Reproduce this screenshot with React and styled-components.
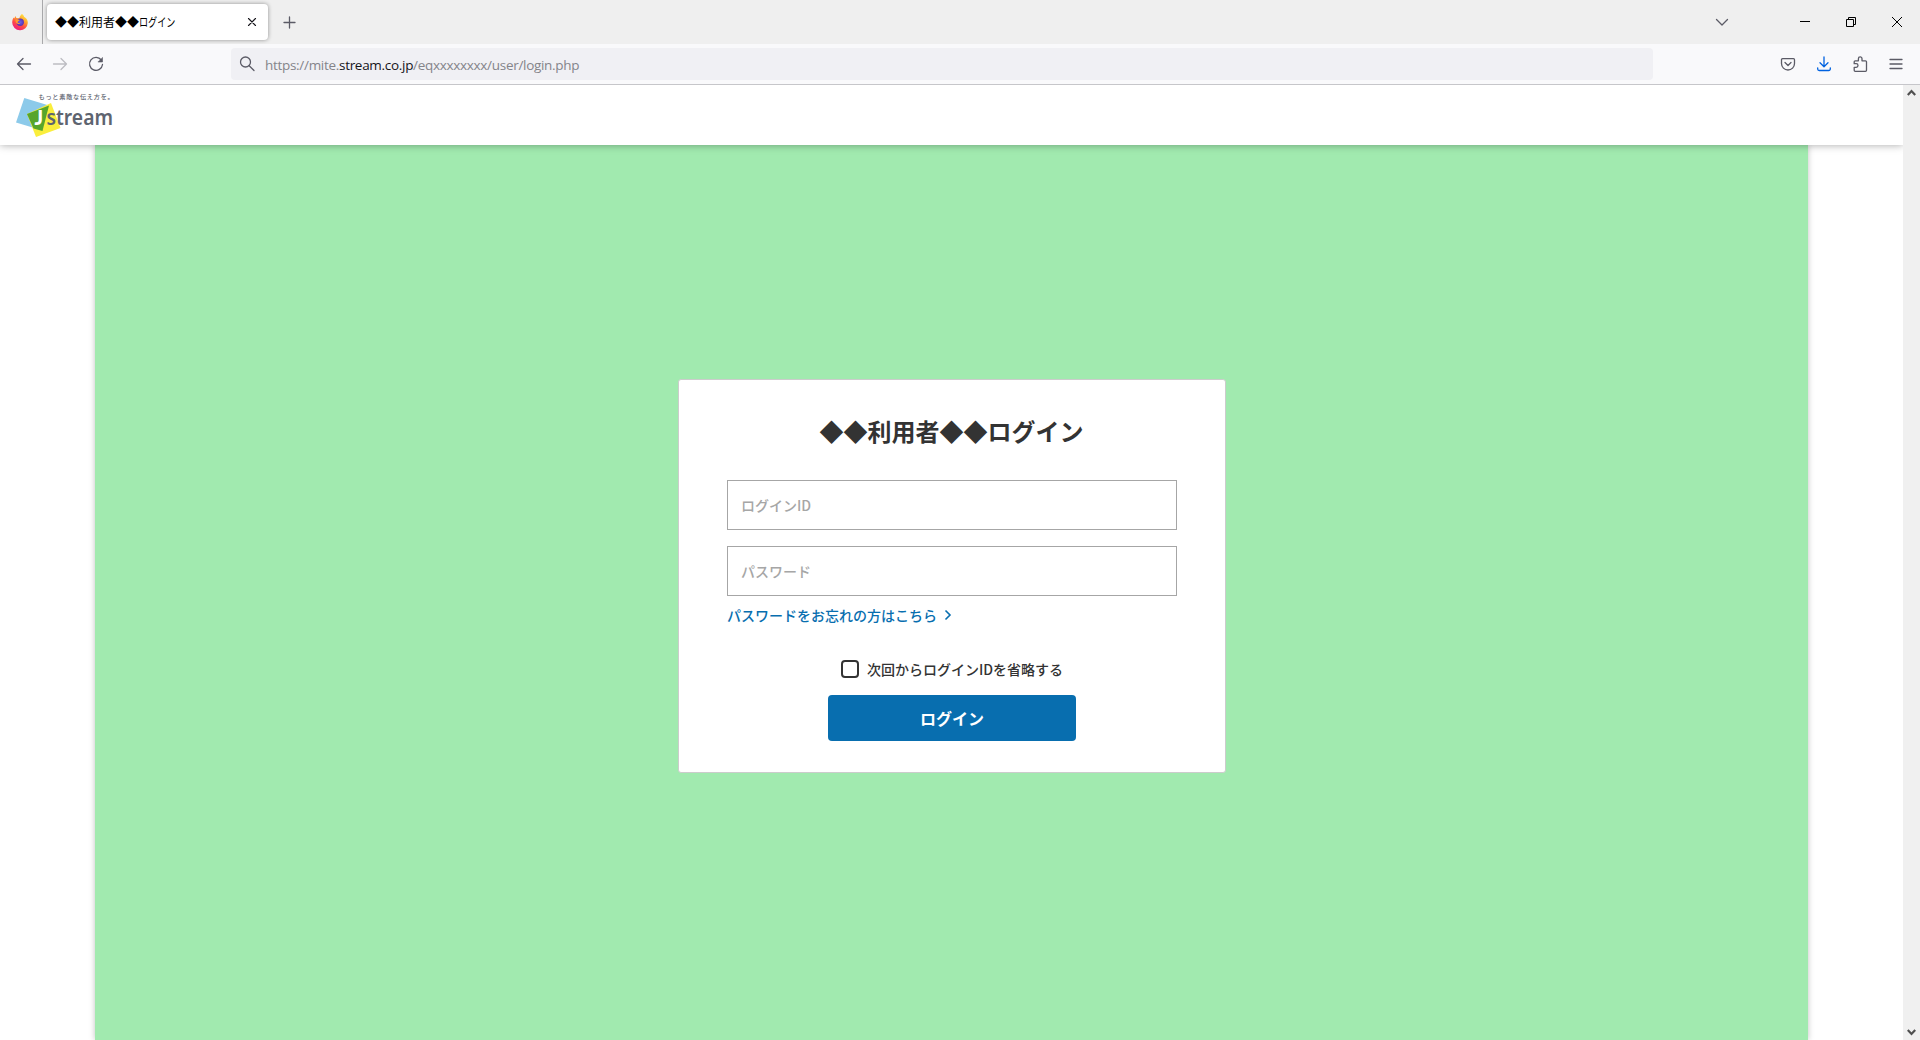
import React from "react";
import styled, { createGlobalStyle } from "styled-components";

const GlobalStyle = createGlobalStyle`
  * {
    box-sizing: border-box;
  }
  body {
    margin: 0;
    overflow: hidden;
    color: #333;
    font-family: "Noto Sans CJK JP", "Noto Sans", sans-serif;
  }
`;

const Window = styled.div`
  display: flex;
  flex-direction: column;
  height: 100vh;
  background: #fff;
`;

const TabBar = styled.div`
  display: flex;
  align-items: center;
  height: 44px;
  flex: none;
  background: #efefef;
`;

const FirefoxView = styled.div`
  display: flex;
  align-items: center;
  padding-left: 11px;
  width: 43px;
  height: 44px;
  border-right: 1px solid #a9a9ab;
`;

const Tab = styled.div`
  display: flex;
  align-items: center;
  justify-content: space-between;
  margin-left: 4px;
  padding: 0 10px 0 8px;
  width: 221px;
  height: 36px;
  border-radius: 4px;
  background: #fff;
  box-shadow: 0 0 4px rgba(0, 0, 0, 0.4);
`;

const TabTitle = styled.span`
  display: flex;
  color: #000;
  font-size: 12px;
  line-height: 18px;
  white-space: nowrap;
`;

const NarrowKana = styled.span`
  transform: scaleX(0.76);
  transform-origin: left;
`;

const NewTab = styled.div`
  display: flex;
  margin-left: 13px;
`;

const WindowButtons = styled.div`
  display: flex;
  align-items: center;
  margin-left: auto;
  padding-right: 18px;
`;

const WindowButton = styled.div`
  display: flex;
  margin-left: ${(p) => p.$gap}px;
`;

const Toolbar = styled.div`
  display: flex;
  align-items: center;
  height: 41px;
  flex: none;
  border-bottom: 1px solid #c6c6ca;
  background: #f9f9fb;
`;

const NavButtons = styled.div`
  display: flex;
  gap: 20px;
  padding-left: 16px;
  width: 231px;
`;

const UrlBar = styled.div`
  display: flex;
  align-items: center;
  width: 1422px;
  height: 32px;
  padding-left: 8px;
  border-radius: 4px;
  background: #f0f0f4;
`;

const Url = styled.span`
  margin: 1px 0 0 10px;
  color: #84848a;
  font-family: "Open Sans", "Noto Sans", sans-serif;
  font-size: 13.5px;
  letter-spacing: -0.3px;
  white-space: nowrap;

  b {
    color: #15141a;
    font-weight: 400;
  }
`;

const ToolbarActions = styled.div`
  display: flex;
  align-items: center;
  gap: 20px;
  margin-left: auto;
  padding-right: 16px;
`;

const Viewport = styled.div`
  display: flex;
  flex: 1;
  min-height: 0;
`;

const Page = styled.div`
  display: flex;
  flex-direction: column;
  flex: 1;
  overflow: hidden;
`;

const Header = styled.header`
  position: relative;
  z-index: 1;
  height: 60px;
  flex: none;
  padding: 1px 0 0 12px;
  background: #fff;
  box-shadow: 0 0 8px rgba(0, 0, 0, 0.35);
`;

const LogoSvg = styled.svg`
  display: block;
  overflow: visible;
`;

const Main = styled.main`
  display: flex;
  flex: 1;
  justify-content: center;
  align-items: flex-start;
  margin: 0 95px;
  padding: 234px 0 0 1px;
  background: #a1eaaf;
  box-shadow: 0 0 6px rgba(0, 0, 0, 0.25);
`;

const Card = styled.form`
  display: flex;
  flex-direction: column;
  align-items: center;
  width: 548px;
  height: 394px;
  padding: 33px 48px 0;
  border: 1px solid #ccc;
  border-radius: 3px;
  background: #fff;
`;

const Title = styled.h1`
  margin: 0 1px 31px 0;
  font-size: 24px;
  font-weight: 700;
  line-height: 36px;
`;

const Field = styled.input`
  width: 450px;
  height: 50px;
  margin: 0 0 16px;
  padding: 0 13px;
  border: 1px solid #a6a6a6;
  border-radius: 0;
  outline: none;
  font: 500 14px "Noto Sans CJK JP", sans-serif;

  &::placeholder {
    color: #a6a6a6;
    opacity: 1;
  }
`;

const ForgotLink = styled.a`
  display: flex;
  align-items: center;
  align-self: flex-start;
  gap: 7px;
  margin-top: -7px;
  color: #086eaf;
  font-size: 14px;
  font-weight: 500;
  line-height: 20px;
`;

const Remember = styled.label`
  display: flex;
  align-items: center;
  gap: 8px;
  margin: 34px 0 16px;
  font-size: 14px;
  font-weight: 500;
  line-height: 20px;
`;

const CheckBox = styled.input`
  appearance: none;
  width: 18px;
  height: 18px;
  margin: 0;
  border: 2px solid #333;
  border-radius: 4px;
`;

const SubmitButton = styled.button`
  width: 248px;
  height: 46px;
  padding: 0;
  border: 0;
  border-radius: 4px;
  background: #086eaf;
  color: #fff;
  font: 700 16px/46px "Noto Sans CJK JP", sans-serif;
`;

const Scrollbar = styled.div`
  display: flex;
  flex-direction: column;
  justify-content: space-between;
  align-items: center;
  width: 17px;
  padding: 4px 0;
  background: #f0f0f0;
`;

const Stroke = ({ size = 16, color = "#5b5b66", width = 1.3, children }) => (
  <svg
    width={size}
    height={size}
    viewBox={`0 0 ${size} ${size}`}
    fill="none"
    stroke={color}
    strokeWidth={width}
    strokeLinecap="round"
    strokeLinejoin="round"
  >
    {children}
  </svg>
);

const FirefoxIcon = () => (
  <svg width="18" height="18" viewBox="0 0 18 18">
    <defs>
      <linearGradient id="fox" x1="0.8" y1="0" x2="0.25" y2="1">
        <stop offset="0" stopColor="#fff04a" />
        <stop offset="0.35" stopColor="#ffa42c" />
        <stop offset="0.65" stopColor="#ff4a45" />
        <stop offset="1" stopColor="#e8178a" />
      </linearGradient>
      <radialGradient id="globe">
        <stop offset="0" stopColor="#6a62e8" />
        <stop offset="1" stopColor="#5b2fb4" />
      </radialGradient>
    </defs>
    <path
      d="M11 1c1.4.9 2 2 2.200 3 1.500.6 3.800 2.800 3.600 6A7.700 7.700 0 0 1 9 17.200 7.700 7.700 0 0 1 1.200 9.500c0-2 .5-3.900 1.500-5.100l.4 1.200L4.700 3l.6 2 3 .2C9 3.300 9.600 1.800 11 1z"
      fill="url(#fox)"
    />
    <circle cx="9.200" cy="9.200" r="3.700" fill="url(#globe)" />
    <path d="M4.300 6.800c1.500-1 3-.5 4.300.1 0 .900-1.500 1-2 2 .2 1 1.500 1.200 2.700.8-.6 1.500-3.300 1.800-4.400-.2z" fill="#ff9a30" />
  </svg>
);

const Logo = () => (
  <LogoSvg width="108" height="54" viewBox="12 86 108 54">
    <path d="M24.300 98 49 105.500 41 130 16 122.500z" fill="#8ccaea" />
    <path d="M51 103 60.500 128 36 137 27 114z" fill="#faee3c" />
    <path d="M27 114 49 105.500 42.500 131 33.500 128.500z" fill="#57a52c" />
    <text
      x="38.500"
      y="99"
      fontSize="6.200"
      letterSpacing="0.720"
      fontWeight="500"
      fill="#5e6470"
    >
      もっと素敵な伝え方を。
    </text>
    <text x="34.500" y="125" fontFamily="Lato" fontSize="20" fontWeight="900" fill="#fff">
      J
    </text>
    <text
      x="46.500"
      y="125"
      textLength="66.500"
      lengthAdjust="spacingAndGlyphs"
      fontFamily="Noto Sans"
      fontSize="22"
      fontWeight="600"
      fill="#5e6470"
    >
      stream
    </text>
  </LogoSvg>
);

export default function App() {
  return (
    <Window>
      <GlobalStyle />
      <TabBar>
        <FirefoxView>
          <FirefoxIcon />
        </FirefoxView>
        <Tab>
          <TabTitle>
            ◆◆利用者◆◆<NarrowKana>ログイン</NarrowKana>
          </TabTitle>
          <Stroke size={12} color="#15141a" width={1.1}>
            <path d="M2.500 2.500l7 7M9.500 2.500l-7 7" />
          </Stroke>
        </Tab>
        <NewTab>
          <Stroke>
            <path d="M8.500 3v11M3 8.500h11" />
          </Stroke>
        </NewTab>
        <WindowButtons>
          <WindowButton $gap={0}>
            <Stroke>
              <path d="M2.500 5.500l5.500 5.500 5.500-5.500" />
            </Stroke>
          </WindowButton>
          <WindowButton $gap={70}>
            <svg width="10" height="10">
              <path d="M0 4.500h10" stroke="#000" />
            </svg>
          </WindowButton>
          <WindowButton $gap={36}>
            <svg width="10" height="10" fill="none" stroke="#000">
              <path d="M.5 2.500h7v7h-7zM2.500 2.500v-2h7v7h-2" />
            </svg>
          </WindowButton>
          <WindowButton $gap={36}>
            <svg width="10" height="10" stroke="#000">
              <path d="M0 0l10 10M10 0L0 10" />
            </svg>
          </WindowButton>
        </WindowButtons>
      </TabBar>

      <Toolbar>
        <NavButtons>
          <Stroke>
            <path d="M14.500 8H1.500M7 2.500L1.500 8 7 13.500" />
          </Stroke>
          <Stroke color="#bdbdc2">
            <path d="M1.500 8h13M9 2.500L14.500 8 9 13.500" />
          </Stroke>
          <Stroke>
            <path d="M13.300 4A6.500 6.500 0 1 0 14.500 8.500" />
            <path d="M14.500 1.800v4.200h-4.200z" fill="#5b5b66" strokeWidth="0.600" />
          </Stroke>
        </NavButtons>
        <UrlBar>
          <Stroke>
            <circle cx="6.500" cy="6" r="5" />
            <path d="M10.200 9.700l4.800 4.800" />
          </Stroke>
          <Url>
            https://mite.<b>stream.co.jp</b>/eqxxxxxxxx/user/login.php
          </Url>
        </UrlBar>
        <ToolbarActions>
          <Stroke>
            <path d="M2.500 2.700h11a1 1 0 0 1 1 1v3.800a6.500 6.500 0 0 1-13 0V3.700a1 1 0 0 1 1-1zM5 6.500l3 3 3-3" />
          </Stroke>
          <Stroke color="#0062e0">
            <path d="M8 1v9.500M4 6.800l4 4 4-4M1.700 11.800v1.200a1.500 1.500 0 0 0 1.500 1.500h9.600a1.500 1.500 0 0 0 1.500-1.500v-1.200" />
          </Stroke>
          <Stroke>
            <path d="M3.200 15.300h10.300a1 1 0 0 0 1-1V5.800a1 1 0 0 0-1-1H10V2.700a1.800 1.800 0 0 0-3.600 0v2.100H3.200a1 1 0 0 0-1 1v1.900h2a1.700 1.700 0 0 1 0 3.600h-2v3a1 1 0 0 0 1 1z" />
          </Stroke>
          <Stroke>
            <path d="M2 3.500h12M2 8h12M2 12.500h12" />
          </Stroke>
        </ToolbarActions>
      </Toolbar>

      <Viewport>
        <Page>
          <Header>
            <Logo />
          </Header>
          <Main>
            <Card>
              <Title>◆◆利用者◆◆ログイン</Title>
              <Field placeholder="ログインID" />
              <Field type="password" placeholder="パスワード" />
              <ForgotLink>
                パスワードをお忘れの方はこちら
                <svg width="8" height="12" fill="none" stroke="#086eaf" strokeWidth="1.600">
                  <path d="M1.500 1.500L6 6l-4.500 4.500" />
                </svg>
              </ForgotLink>
              <Remember>
                <CheckBox type="checkbox" />
                次回からログインIDを省略する
              </Remember>
              <SubmitButton type="button">ログイン</SubmitButton>
            </Card>
          </Main>
        </Page>
        <Scrollbar>
          <svg width="9" height="7" fill="none" stroke="#505050" strokeWidth="2.200">
            <path d="M.8 6L4.500 2l3.700 4" />
          </svg>
          <svg width="9" height="7" fill="none" stroke="#505050" strokeWidth="2.200">
            <path d="M.8 1l3.700 4 3.700-4" />
          </svg>
        </Scrollbar>
      </Viewport>
    </Window>
  );
}
